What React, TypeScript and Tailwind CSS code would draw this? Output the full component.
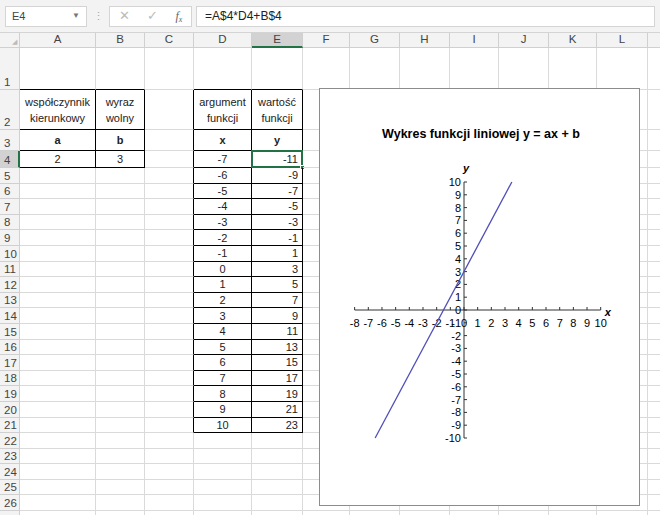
const cols = ["A", "B", "C", "D", "E", "F", "G", "H", "I", "J", "K", "L", "M"];
const colW = [76, 49, 49, 58, 51, 47, 50, 50, 49, 50, 48, 51, 40];
const rowH = [42, 40, 21, 17, ...Array.from({ length: 24 }, () => 15.6)];

type Cell = { t: string; b?: boolean; align?: "c" | "r" };
const data: Record<string, Cell> = {
  A2: { t: "współczynnik\nkierunkowy" },
  B2: { t: "wyraz\nwolny" },
  A3: { t: "a", b: true },
  B3: { t: "b", b: true },
  A4: { t: "2" },
  B4: { t: "3" },
  D2: { t: "argument\nfunkcji" },
  E2: { t: "wartość\nfunkcji" },
  D3: { t: "x", b: true },
  E3: { t: "y", b: true },
};
for (let i = 0; i < 18; i++) {
  const x = i - 7;
  data["D" + (i + 4)] = { t: String(x) };
  data["E" + (i + 4)] = { t: String(2 * x + 3), align: "r" };
}

const inTable = (c: number, r: number) =>
  (c >= 0 && c <= 1 && r >= 2 && r <= 4) || (c >= 3 && c <= 4 && r >= 2 && r <= 21);

function Chart() {
  const ox = 144, oy = 221, ux = 13.67, uy = 12.8;
  const px = (x: number) => ox + x * ux;
  const py = (y: number) => oy - y * uy;
  const xs = Array.from({ length: 19 }, (_, i) => i - 8);
  const ys = Array.from({ length: 21 }, (_, i) => i - 10);
  return (
    <div className="absolute left-[319px] top-[88px] w-[321px] h-[418px] bg-white border border-[#8c8c8c]">
      <svg width="321" height="418" style={{ fontFamily: "'Liberation Sans', Arial, sans-serif" }}>
        <text x="161" y="49" textAnchor="middle" fontWeight="bold" fontSize="12.5">Wykres funkcji liniowej y = ax + b</text>
        <line x1={px(-8)} y1={oy} x2={px(10)} y2={oy} stroke="#333" />
        <line x1={ox} y1={py(10)} x2={ox} y2={py(-10)} stroke="#333" />
        {xs.map((x) => (
          <g key={x}>
            <line x1={px(x)} y1={oy - 3} x2={px(x)} y2={oy} stroke="#333" />
            <text x={px(x)} y={oy + 17} textAnchor="middle" fontSize="11">{x}</text>
          </g>
        ))}
        {ys.map((y) => (
          <g key={y}>
            <line x1={ox} y1={py(y)} x2={ox + 3} y2={py(y)} stroke="#333" />
            <text x={ox - 3} y={py(y) + 4} textAnchor="end" fontSize="11">{y}</text>
          </g>
        ))}
        <text x={px(10) + 4} y={oy + 6} fontWeight="bold" fontStyle="italic" fontSize="11">x</text>
        <text x={ox - 1} y={py(10) - 10} fontWeight="bold" fontStyle="italic" fontSize="11">y</text>
        <line x1={px(-6.5)} y1={py(-10)} x2={px(3.5)} y2={py(10)} stroke="#4f4fb8" strokeWidth="1.3" />
      </svg>
    </div>
  );
}

export default function App() {
  return (
    <div className="relative w-[660px] h-[515px] overflow-hidden bg-white text-[11px] text-[#222]" style={{ fontFamily: "'Liberation Sans', Arial, sans-serif" }}>
      <div className="h-[33px] bg-[#f3f3f3] flex items-center gap-1 px-[5px] border-b border-[#d4d4d4]">
        <div className="w-[82px] h-[21px] bg-white border border-[#d4d4d4] flex items-center justify-between px-1.5 text-[#444]">
          <span>E4</span>
          <span className="text-[8px] text-[#777]">▼</span>
        </div>
        <span className="w-[14px] text-center text-[#aaa]">⋮</span>
        <div className="w-[83px] h-[21px] bg-white border border-[#d4d4d4] flex items-center justify-around text-[#bbb]">
          <span className="text-[13px]">✕</span>
          <span className="text-[13px]">✓</span>
          <span className="italic text-[#666] text-[12px]" style={{ fontFamily: "'Liberation Serif', serif" }}>f<sub className="text-[8px]">x</sub></span>
        </div>
        <div className="flex-1 h-[21px] bg-white border border-[#d4d4d4] flex items-center px-2 text-[12px] text-[#222]">=A$4*D4+B$4</div>
      </div>
      <div className="flex h-[15px] bg-[#f3f3f3] text-[#444] text-[11.5px]">
        <div className="w-[20px] shrink-0 border-r border-b border-[#d0d0d0] flex items-end justify-end text-[#bbb] text-[7px] pr-0.5">◢</div>
        {cols.map((c, i) => (
          <div
            key={c}
            className={`shrink-0 flex items-center justify-center border-r border-[#d0d0d0] ${c === "E" ? "bg-[#d2d2d2] border-b-2 border-b-[#217346]" : "border-b"}`}
            style={{ width: colW[i] }}
          >
            {c}
          </div>
        ))}
      </div>
      {rowH.map((h, ri) => {
        const r = ri + 1;
        return (
          <div key={r} className="flex" style={{ height: h }}>
            <div className={`w-[20px] shrink-0 flex items-end pl-1 text-[11.5px] leading-[14px] text-[#444] border-r border-b border-[#d0d0d0] ${r === 4 ? "bg-[#d2d2d2] border-r-2 border-r-[#217346]" : "bg-[#f3f3f3]"}`}>
              {r}
            </div>
            {cols.map((c, ci) => {
              const cell = data[c + r];
              const bb = inTable(ci, r) || inTable(ci, r + 1);
              const br = inTable(ci, r) || inTable(ci + 1, r);
              const sel = c === "E" && r === 4;
              return (
                <div
                  key={c}
                  className={`relative shrink-0 flex items-center px-1 leading-[16px] border-r border-b ${bb ? "border-b-black" : "border-b-[#dadada]"} ${br ? "border-r-black" : "border-r-[#dadada]"} ${cell?.align === "r" ? "justify-end" : "justify-center text-center"} ${cell?.b ? "font-bold" : ""}`}
                  style={{ width: colW[ci] }}
                >
                  <span className="whitespace-pre-line">{cell?.t}</span>
                  {sel && (
                    <>
                      <div className="absolute -left-px -top-px right-[-1px] bottom-[-1px] border-2 border-[#217346]" />
                      <div className="absolute right-[-3px] bottom-[-3px] w-[5px] h-[5px] bg-[#217346] border border-white" />
                    </>
                  )}
                </div>
              );
            })}
          </div>
        );
      })}
      <Chart />
    </div>
  );
}
